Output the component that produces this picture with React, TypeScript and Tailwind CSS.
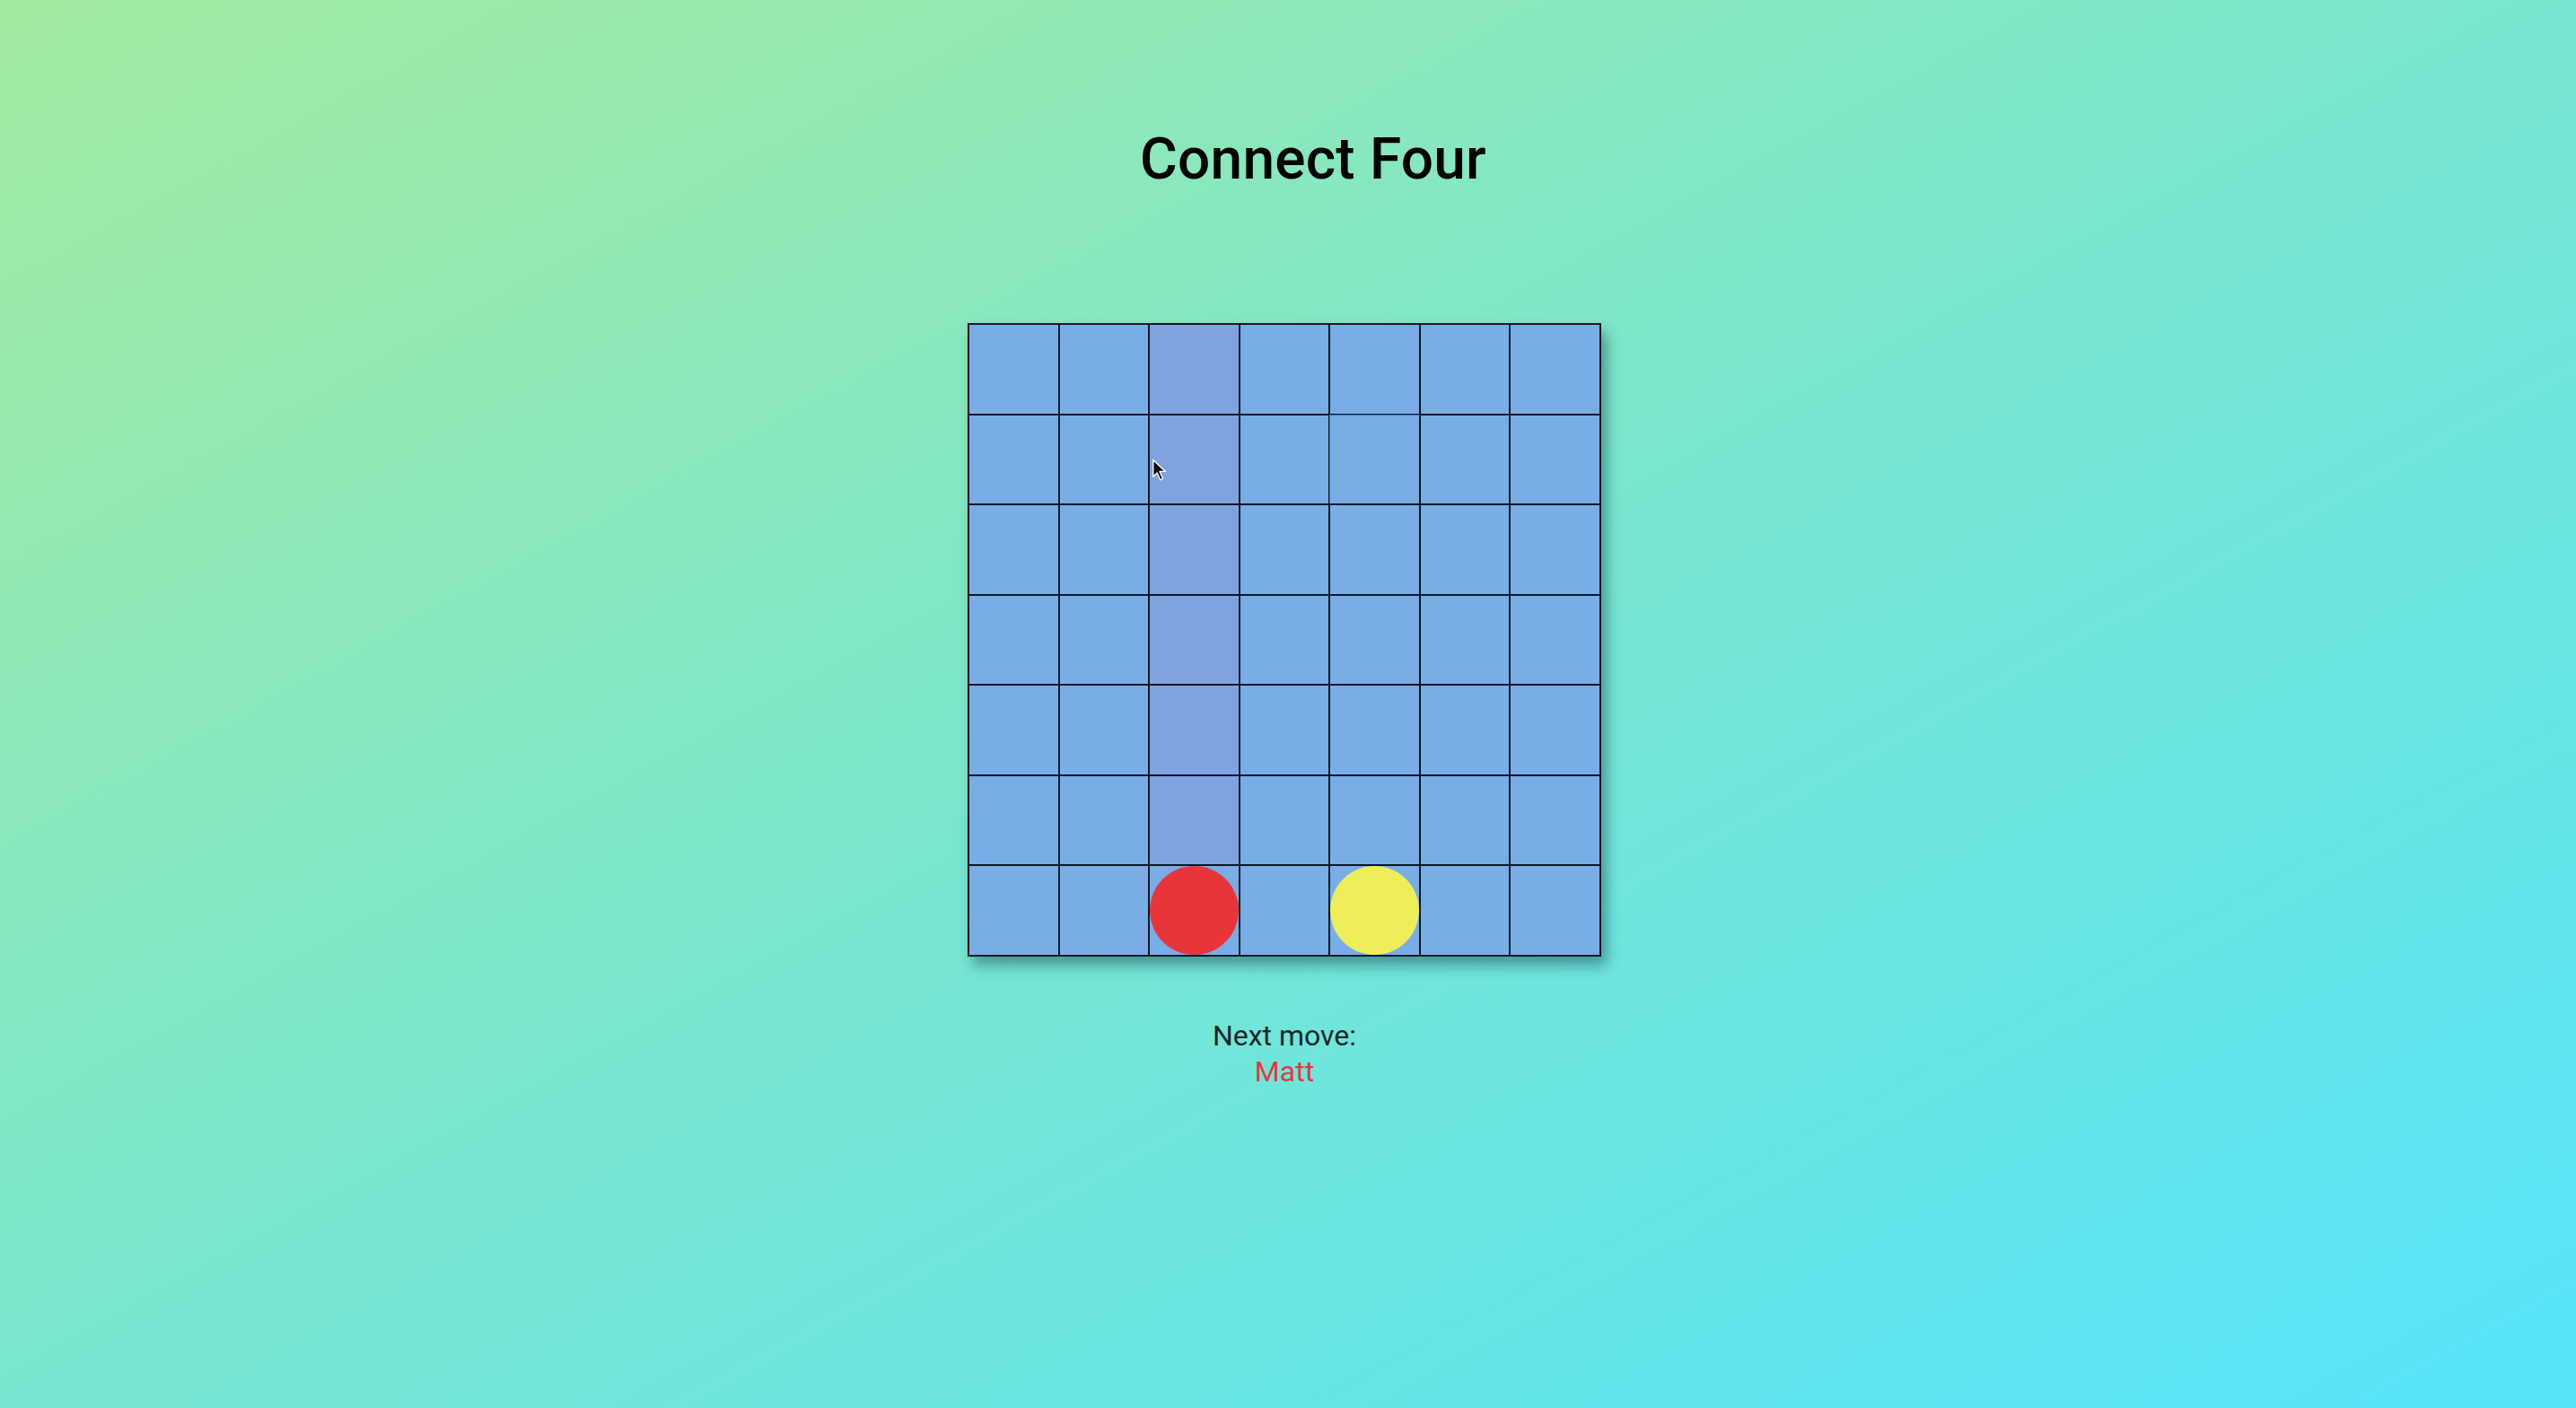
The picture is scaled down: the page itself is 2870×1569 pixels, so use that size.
import { useState } from "react";

type Cell = "red" | "yellow" | null;

const ROWS = 7;
const COLS = 7;

function initialBoard(): Cell[][] {
  const board: Cell[][] = Array.from({ length: ROWS }, () => Array<Cell>(COLS).fill(null));
  board[6][2] = "red";
  board[6][4] = "yellow";
  return board;
}

function Cursor() {
  return (
    <svg
      className="pointer-events-none absolute left-[204px] top-[150px] h-[26px] w-[18px]"
      viewBox="0 0 12 18"
    >
      <path
        d="M1 1 L1 14 L4 11 L6.5 16.5 L8.5 15.5 L6 10 L10.5 10 Z"
        fill="#111"
        stroke="#fff"
        strokeWidth="0.9"
        strokeLinejoin="round"
      />
    </svg>
  );
}

export default function App() {
  const [board] = useState<Cell[][]>(initialBoard);
  const [hoverCol, setHoverCol] = useState<number | null>(2);

  return (
    <div className="min-h-screen w-full bg-[linear-gradient(to_bottom_right,#a4eba0,#78e6d0_50%,#56e4fb)] font-['Roboto','Inter',sans-serif]">
      <div className="flex flex-col items-center pt-[146px]">
        <h1 className="ml-[56px] text-[64px] font-medium leading-none tracking-[0.2px] text-black">
          Connect Four
        </h1>

        <div
          className="relative ml-[-8px] mt-[150px] grid h-[706px] w-[706px] grid-cols-7 grid-rows-7 border-[1.5px] border-[#0a1826] shadow-[6px_10px_14px_rgba(20,60,70,0.45)]"
          onMouseLeave={() => setHoverCol(null)}
        >
          {board.map((row, r) =>
            row.map((cell, c) => {
              const highlighted = hoverCol === c && !cell;
              return (
                <div
                  key={`${r}-${c}`}
                  onMouseEnter={() => setHoverCol(c)}
                  className={`flex items-center justify-center border-[1.5px] border-[#0a1826] ${
                    highlighted ? "bg-[#7ea3e0]" : "bg-[#79ade6]"
                  } ${r === 1 && c === 4 ? "border-l-[#3f6fb8] border-t-[#3f6fb8]" : ""}`}
                >
                  {cell === "red" && <div className="h-full w-full rounded-full bg-[#e8353b]" />}
                  {cell === "yellow" && <div className="h-full w-full rounded-full bg-[#eeee58]" />}
                </div>
              );
            })
          )}
          <Cursor />
        </div>

        <div className="ml-[-8px] mt-[68px] flex flex-col items-center text-[32px] leading-[40px]">
          <span className="text-[#102828]">Next move:</span>
          <span className="text-[#e5393f]">Matt</span>
        </div>
      </div>
    </div>
  );
}
